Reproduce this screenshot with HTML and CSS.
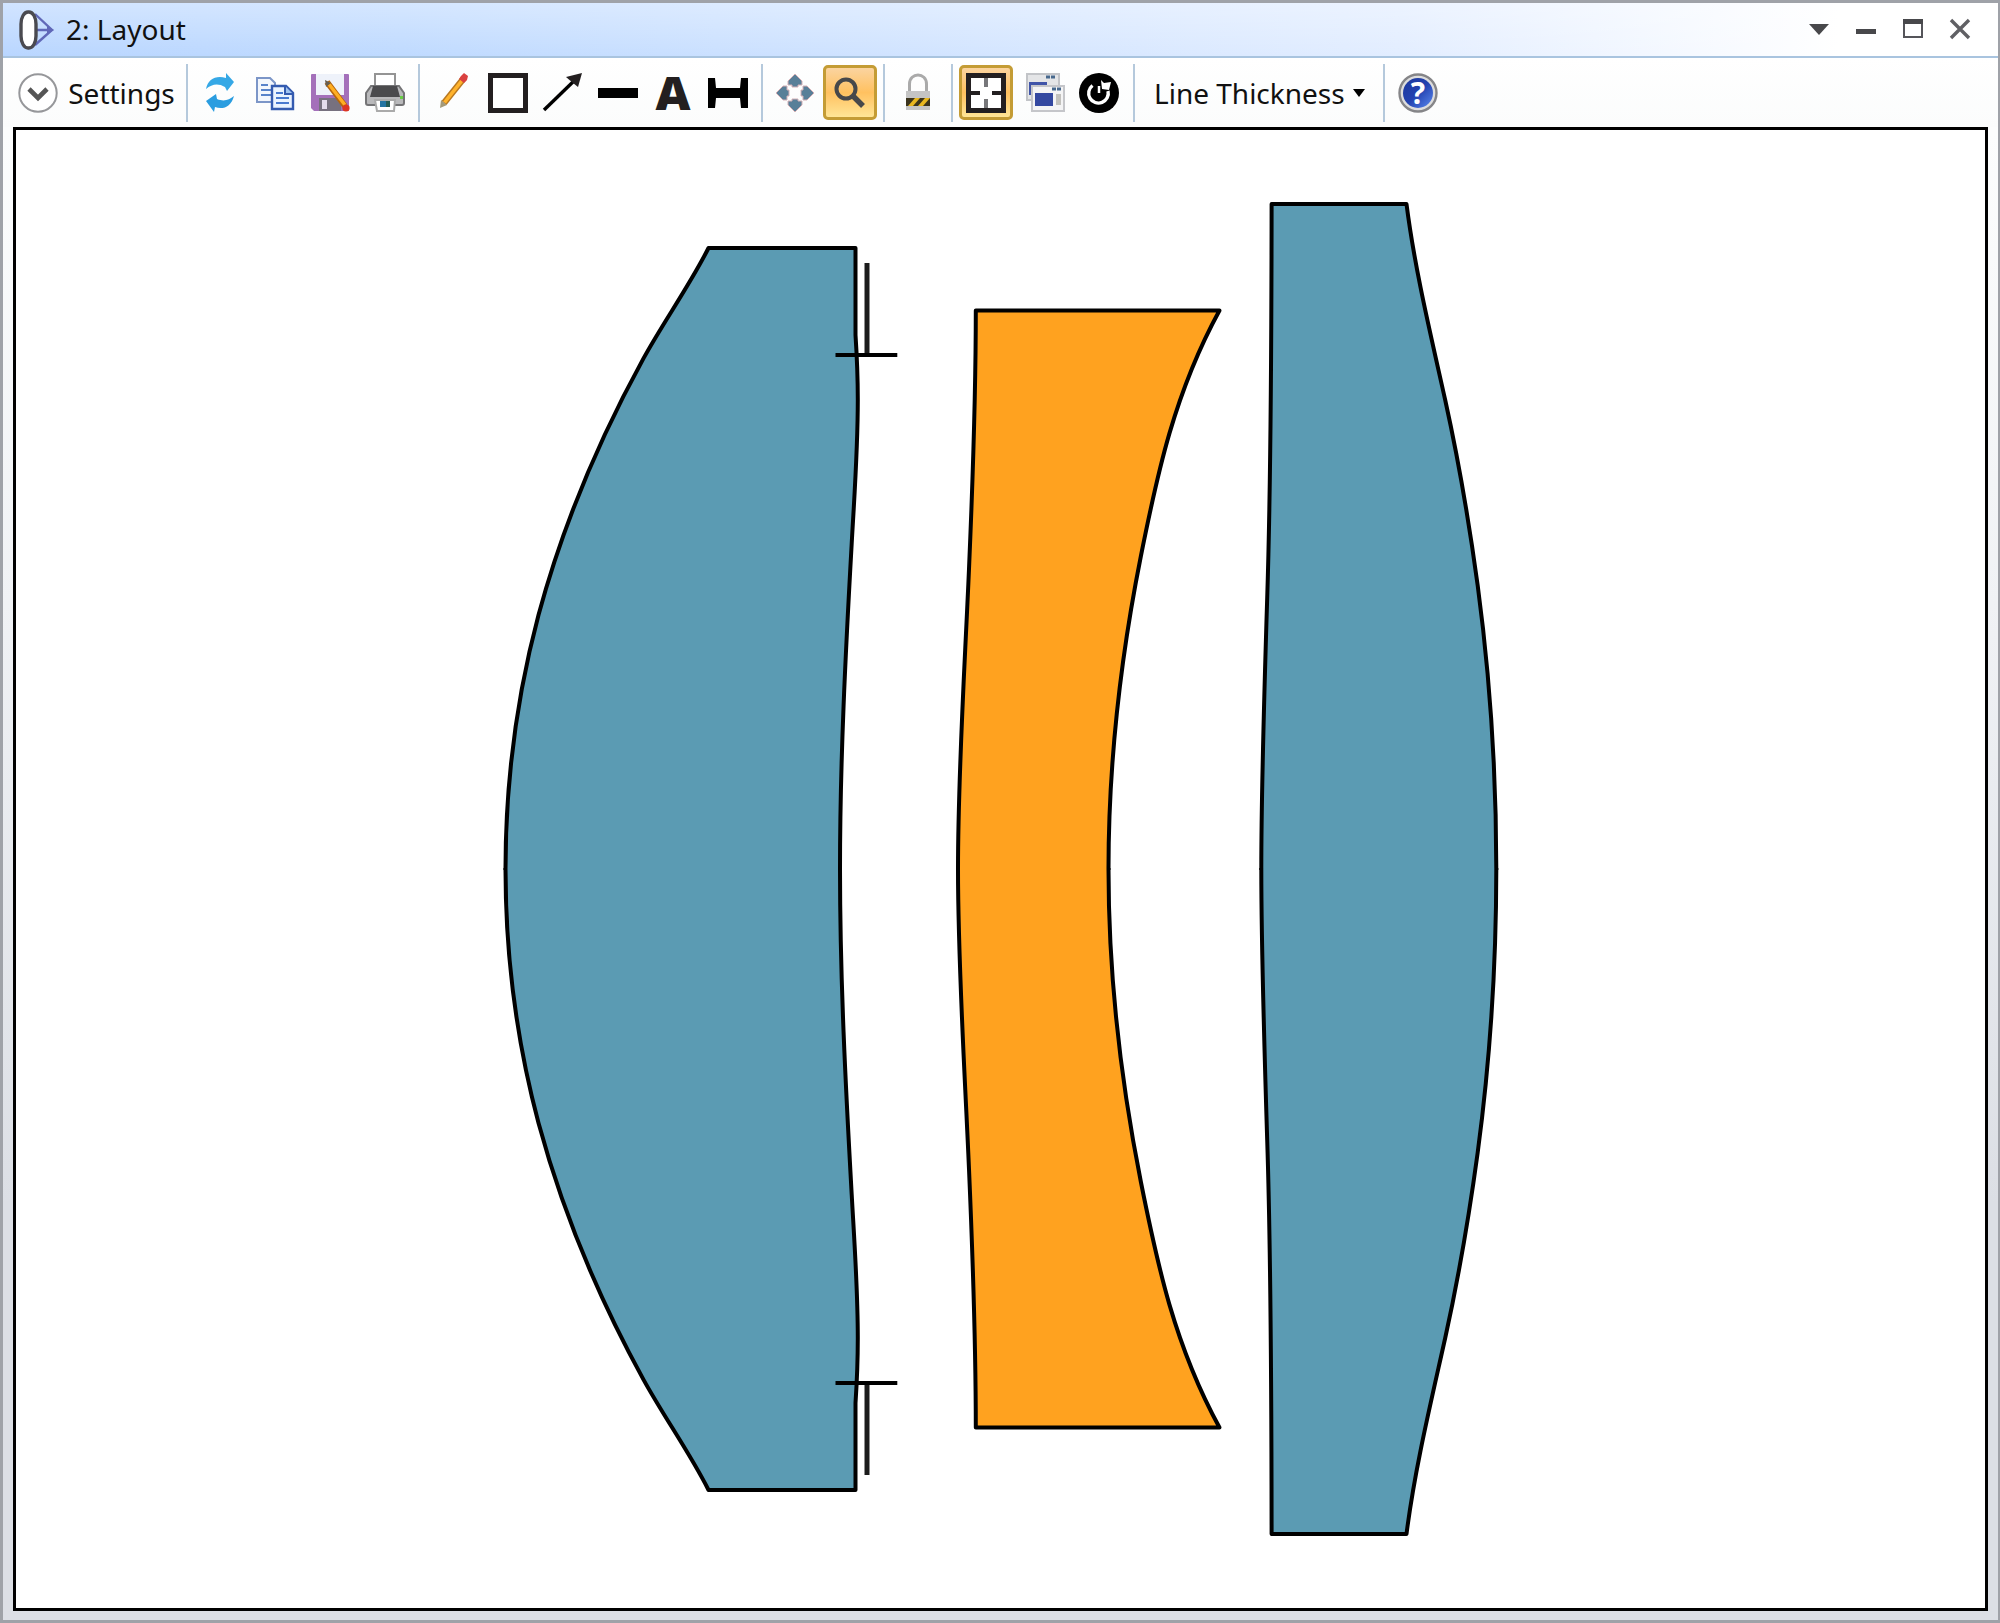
FILE: index.html
```
<!DOCTYPE html>
<html lang="en">
<head>
<meta charset="utf-8">
<title>2: Layout</title>
<link rel="stylesheet" href="styles.css">
</head>
<body>
<div class="window">
  <header class="titlebar">
    <svg class="app-icon" width="36" height="42" viewBox="0 0 36 42"><path d="M16 5 33 21 16 36M16 21H33" fill="none" stroke="#6068b8" stroke-width="2.4"/><path d="M28 17 35 21 28 25Z" fill="#6068b8"/><rect x="2" y="3" width="15" height="36" rx="7" ry="12" fill="#fff" stroke="#4a4a50" stroke-width="3.4"/></svg>
    <h1 class="title">2: Layout</h1>
    <div class="controls">
      <svg width="20" height="20" viewBox="0 0 20 20"><path d="M0 5H20L10 16Z" fill="#48484b"/></svg>
      <svg width="20" height="20" viewBox="0 0 20 20"><path d="M0 10H20V15H0Z" fill="#48484b"/></svg>
      <svg width="20" height="20" viewBox="0 0 20 20"><path d="M1 1V18H19V1" fill="none" stroke="#55555a" stroke-width="2"/><path d="M0 0H20V5H0Z" fill="#48484b"/></svg>
      <svg width="20" height="20" viewBox="0 0 20 20"><path d="M1 1 19 19M19 1 1 19" stroke="#606064" stroke-width="3.4"/></svg>
    </div>
  </header>
  <nav class="toolbar">
    <button class="settings"><svg width="40" height="40" viewBox="0 0 40 40"><circle cx="20" cy="20" r="18.7" fill="#fff" stroke="#96979a" stroke-width="2"/><path d="M11 16 20 25 29 16" fill="none" stroke="#555" stroke-width="4.6"/></svg><span class="settings-label">Settings</span></button>
    <i class="sep sep-a"></i>
    <div class="group group-file">
      <svg width="40" height="40" viewBox="0 0 40 40"><path d="M6 16C8 6 16 2 26 5V0L34 9 27 18 25 14C18 10 12 11 6 16Z" fill="#35a8e6"/><path d="M34 23C31 34 23 37 15 34L14 39 6 28 16 21 17 26C24 29 29 27 34 23Z" fill="#2a9de0"/></svg>
      <svg width="40" height="40" viewBox="0 0 40 40"><path d="M2 5H15L20 10V29H2Z" fill="#f3f7fd" stroke="#7c96c8" stroke-width="2"/><path d="M6 12H13M6 17H16M6 22H16" stroke="#5883ca" stroke-width="2"/><path d="M17 13H31L38 20V36H17Z" fill="#eaf3ff" stroke="#345bb0" stroke-width="2.4"/><path d="M30 13V21H38" fill="#9fc3f0" stroke="#345bb0" stroke-width="2"/><path d="M21 20H28M21 25H34M21 30H34" stroke="#4879cf" stroke-width="2"/></svg>
      <svg width="40" height="40" viewBox="0 0 40 40"><path d="M1 2Q1 1 2 1H38Q39 1 39 2V37Q39 38 38 38H4L1 35Z" fill="#a470ba"/><path d="M6 1H34V22H6Z" fill="#eef2fa"/><path d="M9 25H31V38H9Z" fill="#77717f"/><path d="M12 27H17V36H12Z" fill="#e4dcec"/><path d="M17 9 35 33" stroke="#b7650c" stroke-width="6"/><path d="M18 10 35 32" stroke="#ffae22" stroke-width="3.4"/><path d="M15 7 21 10 16 14Z" fill="#665e52"/><circle cx="36" cy="35" r="3.6" fill="#dd3522"/></svg>
      <svg width="40" height="40" viewBox="0 0 40 40"><path d="M10 1H30V16H10Z" fill="#fff" stroke="#949494" stroke-width="2"/><path d="M6 13H34L39 20V30Q39 32 37 32H3Q1 32 1 30V20Z" fill="#b9b9bb" stroke="#747476" stroke-width="2"/><path d="M8 13H32L35 24H5Z" fill="#4b4b4d"/><path d="M10 27H30L29 38H12Z" fill="#fff" stroke="#aaa" stroke-width="2"/><path d="M15 28H25V34H15Z" fill="#2374a2"/><path d="M21 28H25V34H21Z" fill="#235b54"/><path d="M35 23H38V26H35Z" fill="#69ce45"/></svg>
    </div>
    <i class="sep sep-b"></i>
    <div class="group group-draw">
      <svg width="40" height="40" viewBox="0 0 40 40"><path d="M11 30 31 5" stroke="#b87821" stroke-width="6.4"/><path d="M11.5 29.5 31 5" stroke="#ffb32c" stroke-width="3.6"/><path d="M28 3 31 0 35 3 34 7 31 10 26 6Z" fill="#da4140"/><path d="M8 27 14 32 7 35Z" fill="#a49a79"/></svg>
      <svg width="40" height="40" viewBox="0 0 40 40"><path d="M2.5 2.5H37.5V37.5H2.5Z" fill="#fff" stroke="#231f20" stroke-width="5"/></svg>
      <svg width="40" height="40" viewBox="0 0 40 40"><path d="M1 37 33 6" stroke="#000" stroke-width="3.4"/><path d="M39 0 35 14 30 10 23 4Z" fill="#231f20"/></svg>
      <svg width="40" height="40" viewBox="0 0 40 40"><path d="M0 15H40V25H0Z"/></svg>
      <svg width="40" height="40" viewBox="0 0 40 40"><text class="letter" x="20" y="37" textLength="35" lengthAdjust="spacingAndGlyphs">A</text></svg>
      <svg width="40" height="40" viewBox="0 0 40 40"><path d="M0 5H7L8 15H32L33 5H40V35H33L32 25H8L7 35H0Z"/></svg>
    </div>
    <i class="sep sep-c"></i>
    <div class="group group-nav">
      <svg width="40" height="40" viewBox="0 0 40 40"><path id="arrow" d="M20 1 27 8V12H23V14H17V12H13V8Z" fill="#587f98" stroke="#d3b0b6" stroke-width="1"/><use href="#arrow" transform="rotate(90 20 20)"/><use href="#arrow" transform="rotate(180 20 20)"/><use href="#arrow" transform="rotate(270 20 20)"/></svg>
      <span class="active"><svg width="40" height="40" viewBox="0 0 40 40"><circle cx="16" cy="16" r="9.5" fill="none" stroke="#47484a" stroke-width="4"/><path d="M23 23 33 33" stroke="#47484a" stroke-width="5.5"/></svg></span>
    </div>
    <i class="sep sep-d"></i>
    <svg class="lock" width="40" height="40" viewBox="0 0 40 40"><path d="M11.5 19V11C11.5 -1 28.500 -1 28.500 11V19" fill="none" stroke="#aaa" stroke-width="3"/><path d="M8 18H32V37H8Z" fill="#c4c4c4"/><path d="M8 25H32V33H8Z" fill="#3b341d"/><path d="M10 33 17 25H22L15 33ZM20 33 27 25H32L25 33Z" fill="#e8b720"/></svg>
    <i class="sep sep-e"></i>
    <div class="group group-view">
      <span class="active"><svg width="40" height="40" viewBox="0 0 40 40"><path d="M2.500 2.500H37.500V37.500H2.500Z" fill="#fff" stroke="#231f20" stroke-width="5"/><path d="M20 5V14M20 26V35" stroke="#77777a" stroke-width="4"/><path d="M5 20H14M26 20H35" stroke="#231f20" stroke-width="4"/></svg></span>
      <svg width="40" height="40" viewBox="0 0 40 40"><path d="M1 1H33V27H1Z" fill="#e4e5e7" stroke="#c2c4c8" stroke-width="2"/><path d="M3 9H21V22H3Z" fill="#4054a8"/><path d="M20 4H29" stroke="#47688d" stroke-width="3" stroke-dasharray="4 1"/><path d="M6 13H38V38H6Z" fill="#f4f4f5" stroke="#c5c6ca" stroke-width="2"/><path d="M9 20H27V33H9Z" fill="#3448a0"/><path d="M30 21H35V32H30Z" fill="#c2c1bd"/><path d="M26 16H35" stroke="#47688d" stroke-width="3" stroke-dasharray="4 1"/></svg>
      <svg width="40" height="40" viewBox="0 0 40 40"><circle cx="20" cy="20" r="20"/><path d="M13.500 12.500A9.800 9.800 0 1 0 29 18" fill="none" stroke="#fff" stroke-width="3.400"/><path d="M22 7 25 10 32 9 30 17 23 16Z" fill="#fff"/><path d="M20 13V20" stroke="#fff" stroke-width="2.500"/></svg>
    </div>
    <i class="sep sep-f"></i>
    <button class="thickness"><span class="thickness-label">Line Thickness</span><svg width="12" height="8" viewBox="0 0 12 8"><path d="M0 0H12L6 8Z"/></svg></button>
    <i class="sep sep-g"></i>
    <svg class="help" width="40" height="40" viewBox="0 0 40 40"><defs><linearGradient id="blue" x1="0" y1="0" x2="1" y2="1"><stop offset="0" stop-color="#1c379c"/><stop offset=".5" stop-color="#2342b0"/><stop offset="1" stop-color="#5b8af0"/></linearGradient></defs><circle cx="20" cy="20" r="18.500" fill="#ddd" stroke="#858588" stroke-width="2.400"/><circle cx="20" cy="20" r="15" fill="url(#blue)"/><text class="question" x="20" y="31">?</text></svg>
  </nav>
  <main class="canvas">
    <svg class="drawing" viewBox="16 130 1969 1478">
      <defs>
        <g id="half">
          <path class="glass" d="M505.5 870V869C505.5 784 515.8 700 538.5 615C561.6 529.5 596.5 444 643.5 358.4C663.7 321.6 690 284.8 708.5 248H855.5V335C856.5 350 857.8 375 857.8 400C857.8 450 854.4 495 851.7 543.5C845.6 652 840 760 840 869V870"/>
          <path class="flint" d="M958 870V869C958 770 964.7 669 969 569C972.7 483 975.8 397 975.8 310.5H1219.5C1174.5 392.7 1157.2 474.3 1140.9 556C1120.1 660.3 1108.5 764.7 1108.5 869V870"/>
          <path class="glass" d="M1261.3 870V869C1261.3 800 1264 700 1267.2 598C1271 480 1271.5 350 1271.6 204H1406.5C1414.8 269.3 1430.7 334.7 1445.2 400C1458.9 461.9 1469.3 523.7 1477.7 585.6C1490.4 680 1496.3 774.6 1496.3 869V870"/>
          <path class="stop-arm" d="M867 263V355"/>
          <path class="stop-edge" d="M835.5 355H897.3"/>
        </g>
      </defs>
      <use href="#half"/>
      <use href="#half" transform="matrix(1 0 0 -1 0 1738)"/>
    </svg>
  </main>
</div>
</body>
</html>
```
FILE: styles.css
```
* { box-sizing: border-box; }
body { margin: 0; background: #dcdfe5; font-family: "Noto Sans", "Open Sans", sans-serif; color: #111; }
svg { display: block; flex: none; overflow: visible; }
button { border: 0; padding: 0; background: none; font: inherit; color: inherit; display: flex; align-items: center; }
.window { width: 2000px; height: 1623px; display: flex; flex-direction: column; border: 3px solid #9fa2a8; border-right-width: 2px; background: linear-gradient(#fcfdfd 130px, #f0f2f5 600px, #dcdfe5 1200px); }
.titlebar { height: 55px; flex: none; display: flex; align-items: center; padding: 0 28px 2px 16px; border-bottom: 2px solid #a9c4df; background: linear-gradient(180deg, rgba(255,255,255,.35), rgba(255,255,255,0)), linear-gradient(90deg, #b9d6ff 0, #bfdaff 20%, #e2edff 70%, #fff 92%); }
.app-icon { margin-top: 2px; }
.title { margin: 0 0 0 11px; font-size: 28px; font-weight: 400; line-height: 40px; width: 122px; white-space: nowrap; }
.controls { margin-left: auto; display: flex; gap: 27px; }
.toolbar { height: 69px; flex: none; display: flex; align-items: center; background: linear-gradient(#fff, #fbfcfc); }
.settings { margin-left: 15px; gap: 9px; }
.settings-label { font-size: 28px; width: 109px; white-space: nowrap; }
.sep { width: 2px; height: 58px; background: #b5c9dc; flex: none; }
.group { display: flex; align-items: center; flex: none; }
.group-file { gap: 15px; }
.group-draw { gap: 15px; }
.active { width: 54px; height: 55px; display: grid; place-items: center; border: 3px solid #c49c35; border-radius: 5px; background: linear-gradient(#fbd4a0, #ffc160 50%, #ffe596); }
.canvas { flex: none; margin: 0 10px 0 10px; height: 1484px; border: 3px solid #000; background: #fff; }
.drawing { width: 100%; height: 100%; }
.glass, .flint { stroke: #000; stroke-width: 4; stroke-linejoin: round; }
.glass { fill: #5b9bb3; }
.flint { fill: #ffa21f; }
.stop-arm { stroke: #1c1c1c; stroke-width: 5; }
.stop-edge { stroke: #000; stroke-width: 4; }
.sep-a { margin-left: 10px; }
.group-file { margin-left: 12px; }
.sep-b { margin-left: 13px; }
.group-draw { margin-left: 13px; }
.sep-c { margin-left: 13px; }
.group-nav { margin-left: 12px; gap: 8px; }
.sep-d { margin-left: 6px; }
.lock { margin-left: 13px; }
.sep-e { margin-left: 13px; }
.group-view { margin-left: 6px; gap: 13px; }
.sep-f { margin-left: 14px; }
.thickness { margin-left: 19px; gap: 12px; }
.thickness-label { font-size: 28px; width: 187px; white-space: nowrap; }
.sep-g { margin-left: 18px; }
.help { margin-left: 13px; }
.letter { font: 900 46px "Noto Sans", sans-serif; text-anchor: middle; fill: #231f20; }
.question { font: 700 30px "Noto Sans", sans-serif; text-anchor: middle; fill: #fff; }
```
